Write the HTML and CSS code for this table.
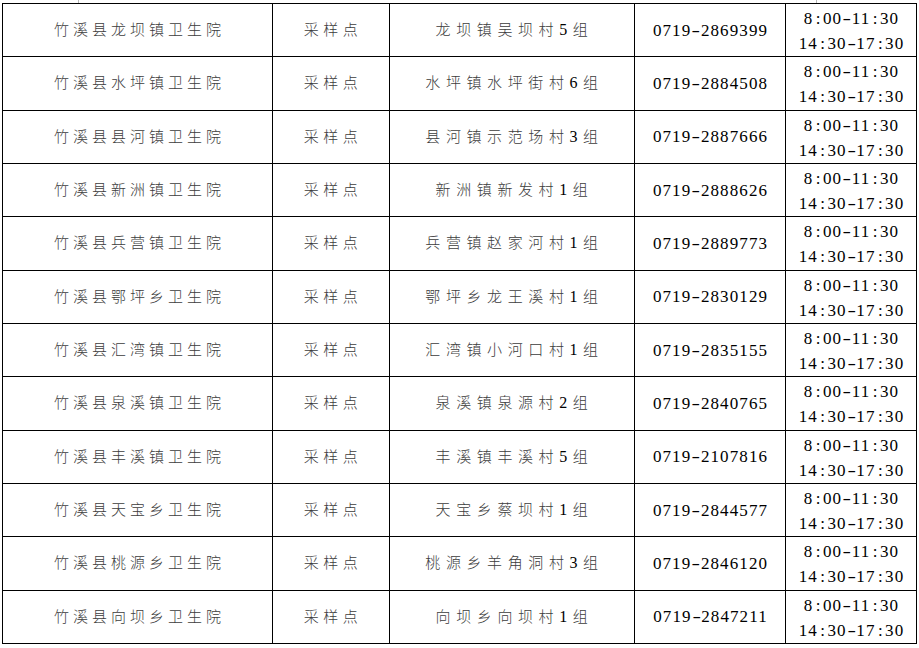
FILE: index.html
```html
<!DOCTYPE html>
<html lang="zh-CN">
<head>
<meta charset="utf-8">
<title>竹溪县采样点</title>
<link rel="stylesheet" href="styles.css">
</head>
<body>
<div class="page">
  <div class="stub"><span class="tick t1"></span><span class="tick t2"></span></div>
  <table class="sites">
    <colgroup>
      <col class="c-name"><col class="c-type"><col class="c-addr"><col class="c-tel"><col class="c-time">
    </colgroup>
    <tbody>
      <tr><td class="name">竹溪县龙坝镇卫生院</td><td class="type">采样点</td><td class="addr">龙坝镇吴坝村<span class="n">5</span>组</td><td class="tel">0719<span class="d">-</span>2869399</td><td class="time">8<span class="c">:</span>00<span class="d">-</span>11<span class="c">:</span>30<br>14<span class="c">:</span>30<span class="d">-</span>17<span class="c">:</span>30</td></tr>
      <tr><td class="name">竹溪县水坪镇卫生院</td><td class="type">采样点</td><td class="addr">水坪镇水坪街村<span class="n">6</span>组</td><td class="tel">0719<span class="d">-</span>2884508</td><td class="time">8<span class="c">:</span>00<span class="d">-</span>11<span class="c">:</span>30<br>14<span class="c">:</span>30<span class="d">-</span>17<span class="c">:</span>30</td></tr>
      <tr><td class="name">竹溪县县河镇卫生院</td><td class="type">采样点</td><td class="addr">县河镇示范场村<span class="n">3</span>组</td><td class="tel">0719<span class="d">-</span>2887666</td><td class="time">8<span class="c">:</span>00<span class="d">-</span>11<span class="c">:</span>30<br>14<span class="c">:</span>30<span class="d">-</span>17<span class="c">:</span>30</td></tr>
      <tr><td class="name">竹溪县新洲镇卫生院</td><td class="type">采样点</td><td class="addr">新洲镇新发村<span class="n">1</span>组</td><td class="tel">0719<span class="d">-</span>2888626</td><td class="time">8<span class="c">:</span>00<span class="d">-</span>11<span class="c">:</span>30<br>14<span class="c">:</span>30<span class="d">-</span>17<span class="c">:</span>30</td></tr>
      <tr><td class="name">竹溪县兵营镇卫生院</td><td class="type">采样点</td><td class="addr">兵营镇赵家河村<span class="n">1</span>组</td><td class="tel">0719<span class="d">-</span>2889773</td><td class="time">8<span class="c">:</span>00<span class="d">-</span>11<span class="c">:</span>30<br>14<span class="c">:</span>30<span class="d">-</span>17<span class="c">:</span>30</td></tr>
      <tr><td class="name">竹溪县鄂坪乡卫生院</td><td class="type">采样点</td><td class="addr">鄂坪乡龙王溪村<span class="n">1</span>组</td><td class="tel">0719<span class="d">-</span>2830129</td><td class="time">8<span class="c">:</span>00<span class="d">-</span>11<span class="c">:</span>30<br>14<span class="c">:</span>30<span class="d">-</span>17<span class="c">:</span>30</td></tr>
      <tr><td class="name">竹溪县汇湾镇卫生院</td><td class="type">采样点</td><td class="addr">汇湾镇小河口村<span class="n">1</span>组</td><td class="tel">0719<span class="d">-</span>2835155</td><td class="time">8<span class="c">:</span>00<span class="d">-</span>11<span class="c">:</span>30<br>14<span class="c">:</span>30<span class="d">-</span>17<span class="c">:</span>30</td></tr>
      <tr><td class="name">竹溪县泉溪镇卫生院</td><td class="type">采样点</td><td class="addr">泉溪镇泉源村<span class="n">2</span>组</td><td class="tel">0719<span class="d">-</span>2840765</td><td class="time">8<span class="c">:</span>00<span class="d">-</span>11<span class="c">:</span>30<br>14<span class="c">:</span>30<span class="d">-</span>17<span class="c">:</span>30</td></tr>
      <tr><td class="name">竹溪县丰溪镇卫生院</td><td class="type">采样点</td><td class="addr">丰溪镇丰溪村<span class="n">5</span>组</td><td class="tel">0719<span class="d">-</span>2107816</td><td class="time">8<span class="c">:</span>00<span class="d">-</span>11<span class="c">:</span>30<br>14<span class="c">:</span>30<span class="d">-</span>17<span class="c">:</span>30</td></tr>
      <tr><td class="name">竹溪县天宝乡卫生院</td><td class="type">采样点</td><td class="addr">天宝乡蔡坝村<span class="n">1</span>组</td><td class="tel">0719<span class="d">-</span>2844577</td><td class="time">8<span class="c">:</span>00<span class="d">-</span>11<span class="c">:</span>30<br>14<span class="c">:</span>30<span class="d">-</span>17<span class="c">:</span>30</td></tr>
      <tr><td class="name">竹溪县桃源乡卫生院</td><td class="type">采样点</td><td class="addr">桃源乡羊角洞村<span class="n">3</span>组</td><td class="tel">0719<span class="d">-</span>2846120</td><td class="time">8<span class="c">:</span>00<span class="d">-</span>11<span class="c">:</span>30<br>14<span class="c">:</span>30<span class="d">-</span>17<span class="c">:</span>30</td></tr>
      <tr><td class="name">竹溪县向坝乡卫生院</td><td class="type">采样点</td><td class="addr">向坝乡向坝村<span class="n">1</span>组</td><td class="tel">0719<span class="d">-</span>2847211</td><td class="time">8<span class="c">:</span>00<span class="d">-</span>11<span class="c">:</span>30<br>14<span class="c">:</span>30<span class="d">-</span>17<span class="c">:</span>30</td></tr>
    </tbody>
  </table>
</div>
</body>
</html>
```
FILE: styles.css
```css
html, body {
  margin: 0;
  padding: 0;
  background: #fff;
}

.page {
  padding-left: 2px;
  font-family: "Liberation Serif", "Noto Sans CJK SC", serif;
  color: #000;
}

.stub {
  display: flex;
  height: 3px;
}

.tick {
  width: 1px;
  height: 3px;
  background: #b8b8b8;
}

.t1 { margin-left: 76px; }
.t2 { margin-left: 737px; }

.sites {
  border-collapse: collapse;
  table-layout: fixed;
  width: 914px;
}

.c-name { width: 270px; }
.c-type { width: 117px; }
.c-addr { width: 245px; }
.c-tel  { width: 151px; }
.c-time { width: 131px; }

.sites tr {
  height: 53.33px;
}

.sites td {
  border: 1px solid #000;
  padding: 0;
  text-align: center;
  vertical-align: middle;
  white-space: nowrap;
  line-height: 20px;
}

.sites td.name,
.sites td.type,
.sites td.addr {
  font-size: 15px;
  font-weight: 300;
  color: #3c3c3c;
}

.sites td.name {
  letter-spacing: 4px;
  padding-left: 4px;
}

.sites td.type {
  letter-spacing: 4.5px;
  padding-left: 4px;
}

.sites td.addr {
  letter-spacing: 5.6px;
  padding-left: 5px;
}

.addr .n {
  font-size: 16px;
  color: #000;
}

.sites td.tel,
.sites td.time {
  font-size: 17px;
  letter-spacing: 1.1px;
  padding-left: 1px;
}

.sites td.tel {
  padding-top: 1px;
}

.sites td.time {
  line-height: 25px;
  padding-top: 2px;
}

.c, .d {
  display: inline-block;
  width: 9.6px;
  text-align: center;
  letter-spacing: 0;
}

.d {
  transform: scaleX(1.5);
}
```
